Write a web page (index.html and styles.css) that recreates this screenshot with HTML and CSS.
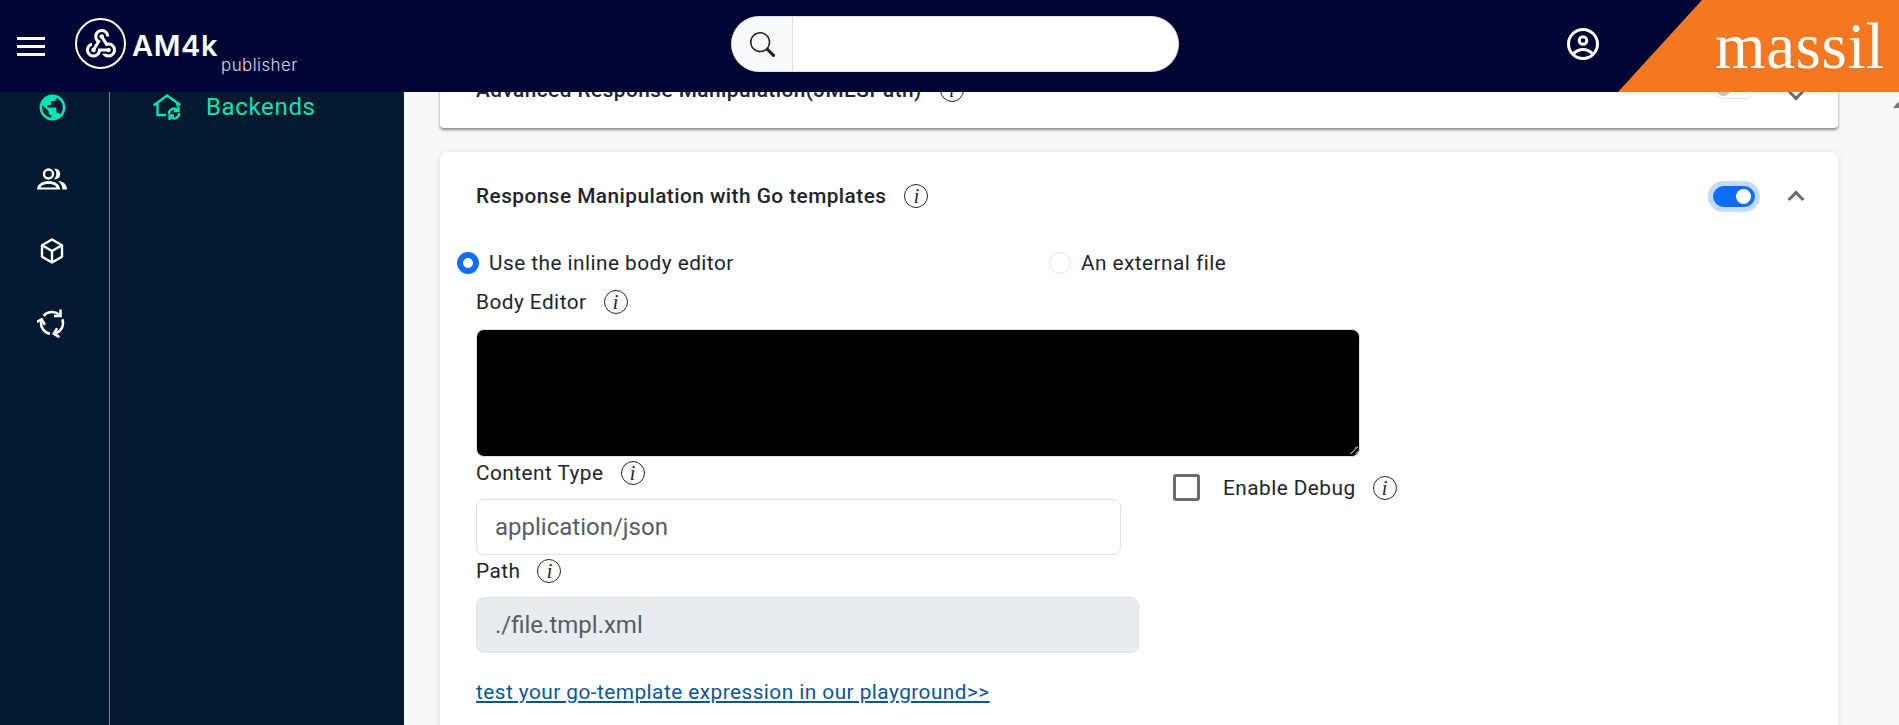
FILE: index.html
```html
<!DOCTYPE html>
<html lang="en">
<head>
  <meta charset="UTF-8">
  <title>AM4k publisher</title>
  <link rel="stylesheet" href="styles.css">
</head>
<body>
  <header class="topbar">
    <div class="burger"><span></span><span></span><span></span></div>
    <div class="logo">
      <div class="logo-ring">
        <svg viewBox="0 0 24 24" width="36" height="36" fill="#fff"><path d="M10 15h5.880c.27-.31.67-.5 1.120-.5.83 0 1.500.67 1.500 1.500s-.67 1.500-1.500 1.500c-.44 0-.84-.19-1.120-.5H11.900c-.46 2.280-2.480 4-4.900 4-2.760 0-5-2.240-5-5 0-2.420 1.720-4.440 4-4.900v2.070c-1.160.41-2 1.530-2 2.830 0 1.650 1.350 3 3 3s3-1.350 3-3v-1zm2.500-11c1.650 0 3 1.350 3 3h2c0-2.760-2.240-5-5-5s-5 2.240-5 5c0 1.430.6 2.710 1.550 3.620l-2.350 3.900c-.68.14-1.200.75-1.200 1.480 0 .83.67 1.500 1.500 1.500s1.500-.67 1.500-1.500c0-.16-.02-.31-.07-.45l3.380-5.630C10.490 9.610 9.500 8.420 9.500 7c0-1.650 1.350-3 3-3zm4.500 9c-.64 0-1.230.2-1.720.54l-3.050-5.070C11.530 8.350 11 7.740 11 7c0-.83.67-1.500 1.500-1.500S14 6.170 14 7c0 .15-.02.29-.06.43l2.190 3.650c.28-.05.57-.08.87-.08 2.760 0 5 2.240 5 5s-2.240 5-5 5c-1.850 0-3.470-1.010-4.330-2.500h2.670c.48.32 1.050.5 1.660.5 1.650 0 3-1.350 3-3s-1.350-3-3-3z"/></svg>
      </div>
      <div class="logo-text">
        <div class="logo-name">AM4k</div>
        <div class="logo-sub">publisher</div>
      </div>
    </div>
    <div class="search">
      <div class="search-icon">
        <svg viewBox="0 0 16 16" width="25" height="25" fill="#212529"><path d="M11.742 10.344a6.5 6.5 0 1 0-1.397 1.398h-.001c.03.04.062.078.098.115l3.85 3.85a1 1 0 0 0 1.415-1.414l-3.85-3.85a1.007 1.007 0 0 0-.115-.1zM12 6.5a5.5 5.5 0 1 1-11 0 5.5 5.5 0 0 1 11 0z"/></svg>
      </div>
      <div class="search-input"></div>
    </div>
    <div class="user">
      <svg viewBox="0 0 32 32" width="32" height="32" fill="none" stroke="#fff" stroke-width="3"><circle cx="16" cy="16" r="14.500"/><circle cx="16" cy="12.500" r="3.800"/><path d="M6.500 26c2.500-3 6-4.500 9.500-4.500s7 1.500 9.500 4.500"/></svg>
    </div>
    <div class="brand"><span>massil</span></div>
  </header>

  <div class="page">
    <aside class="sidebar">
      <nav class="rail">
        <div class="rail-item">
          <svg viewBox="0 0 24 24" width="31" height="31" fill="#00e6b4"><path d="M12 2C6.480 2 2 6.480 2 12s4.480 10 10 10 10-4.480 10-10S17.520 2 12 2zm-1 17.930c-3.950-.49-7-3.850-7-7.930 0-.62.080-1.210.21-1.790L9 15v1c0 1.100.9 2 2 2v1.930zm6.900-2.540c-.26-.81-1-1.390-1.900-1.390h-1v-3c0-.55-.45-1-1-1H8v-2h2c.55 0 1-.45 1-1V7h2c1.100 0 2-.9 2-2v-.41c2.930 1.190 5 4.060 5 7.410 0 2.080-.8 3.970-2.100 5.390z"/></svg>
        </div>
        <div class="rail-item">
          <svg viewBox="0 0 30 22" width="30" height="22" fill="#fff"><circle cx="11.500" cy="6" r="4.500" fill="none" stroke="#fff" stroke-width="2.400"/><path d="M0 21.500c0-5 5-8.500 11.500-8.500S23 16.500 23 21.500z"/><path d="M3.500 19.500c.5-2 3.800-3.500 8-3.500s7.500 1.500 8 3.500z" fill="#03192f"/><path d="M17 .8c3.200-.8 6.200 1.500 6.200 5.200s-3 6-6.200 5.200c1.500-1.300 2.300-3.200 2.300-5.200S18.500 2.100 17 .8zM21 13c5.500.5 9 3.500 9 8.500h-4.500c0-3.500-1.800-6.500-4.500-8.500z"/></svg>
        </div>
        <div class="rail-item">
          <svg viewBox="0 0 24 26" width="24" height="26" fill="none" stroke="#fff" stroke-width="2.400" stroke-linejoin="round"><path d="M12 1.500l10 5.700v11.600l-10 5.700-10-5.700V7.200z"/><path d="M2.500 7.500L12 13l9.500-5.500M12 13v11"/></svg>
        </div>
        <div class="rail-item">
          <svg viewBox="0 0 30 30" width="30" height="30" fill="none" stroke="#fff" stroke-width="2.500">
            <g><path d="M6.600 7.900A11 11 0 0 1 22.100 6.600"/><path d="M23.500 1.500V8H17"/></g>
            <g transform="rotate(120 15 15)"><path d="M6.600 7.900A11 11 0 0 1 22.100 6.600"/><path d="M23.500 1.500V8H17"/></g>
            <g transform="rotate(240 15 15)"><path d="M6.600 7.900A11 11 0 0 1 22.100 6.600"/><path d="M23.500 1.500V8H17"/></g>
          </svg>
        </div>
      </nav>
      <div class="subnav">
        <div class="subnav-item">
          <svg viewBox="0 0 28 26" width="28" height="26" fill="none" stroke="#00e6b4" stroke-width="2.300"><path d="M.7 11.500L14 1.500l13.300 9.500"/><path d="M4.500 9v12H13"/><path d="M24.500 9v3.500"/><path d="M16 20a5 5 0 0 1 8.500-4"/><path d="M25.500 12.500V17H21"/><path d="M26 19a5 5 0 0 1-8.500 4"/><path d="M16.500 26v-4.500H21"/></svg>
          <span>Backends</span>
        </div>
      </div>
    </aside>

    <main class="content">
      <section class="card card-closed">
        <div class="card-head">
          <h3>Advanced Response Manipulation(JMESPath)</h3>
          <i class="info">i</i>
          <div class="switch"></div>
          <div class="chevron down"></div>
        </div>
      </section>

      <section class="card card-open">
        <div class="card-head">
          <h3>Response Manipulation with Go templates</h3>
          <i class="info">i</i>
          <div class="switch on"></div>
          <div class="chevron up"></div>
        </div>

        <div class="radios">
          <label class="radio"><span class="dot on"></span>Use the inline body editor</label>
          <label class="radio"><span class="dot"></span>An external file</label>
        </div>

        <div class="field-label first">Body Editor <i class="info">i</i></div>
        <div class="editor"></div>

        <div class="columns">
          <div class="col-left">
            <div class="field-label">Content Type <i class="info">i</i></div>
            <div class="input short">application/json</div>
            <div class="field-label second">Path <i class="info">i</i></div>
            <div class="input disabled">./file.tmpl.xml</div>
            <a class="playground" href="#">test your go-template expression in our playground&gt;&gt;</a>
          </div>
          <div class="col-right">
            <span class="checkbox"></span>
            <span class="check-label">Enable Debug</span>
            <i class="info">i</i>
          </div>
        </div>
      </section>
    </main>
  </div>
  <div class="scroll-tip"></div>
</body>
</html>
```

FILE: styles.css
```css
* {
  margin: 0;
  padding: 0;
  box-sizing: border-box;
}
html, body {
  height: 100%;
  overflow: hidden;
}
body {
  font-family: Roboto, "Liberation Sans", sans-serif;
  font-size: 20.8px;
  letter-spacing: 0.46px;
  color: #212529;
  background: #f8f8f8;
}

/* top bar sits over the scrolled page */
.topbar {
  position: absolute;
  top: 0;
  left: 0;
  right: 0;
  height: 92px;
  z-index: 5;
  background: #000533;
  display: flex;
  align-items: center;
}
.burger {
  width: 28px;
  margin-left: 17px;
  display: flex;
  flex-direction: column;
  gap: 5px;
}
.burger span {
  height: 3px;
  background: #fff;
}
.logo {
  display: flex;
  margin-left: 30px;
  align-items: flex-start;
  height: 51px;
  margin-top: -5px;
}
.logo-ring {
  width: 51px;
  height: 51px;
  border: 2px solid #fff;
  border-radius: 50%;
  display: flex;
  align-items: center;
  justify-content: center;
}
.logo-text {
  margin-left: 6px;
  color: #fff;
}
.logo-name {
  font-family: Inter, sans-serif;
  font-weight: 600;
  font-size: 29px;
  line-height: 35px;
  letter-spacing: 0.6px;
  margin-top: 10px;
}
.logo-sub {
  font-family: Inter, sans-serif;
  font-weight: 300;
  font-size: 17px;
  line-height: 20px;
  letter-spacing: 0.4px;
  margin: -8px 0 0 89px;
  color: #d5d6e0;
  width: 90px;
}
.search {
  position: absolute;
  left: 731px;
  top: 16px;
  width: 448px;
  height: 56px;
  border-radius: 28px;
  overflow: hidden;
  display: flex;
  background: #fff;
  border: 1px solid #dee2e6;
}
.search-icon {
  width: 61px;
  background: #f8f9fa;
  border-right: 1px solid #dee2e6;
  display: flex;
  align-items: center;
  justify-content: center;
}
.search-input {
  flex: 1;
}
.user {
  position: absolute;
  left: 1567px;
  top: 28px;
  height: 32px;
}
.brand {
  position: absolute;
  top: 0;
  right: 0;
  width: 281px;
  height: 92px;
  background: #f47721;
  clip-path: polygon(84px 0, 100% 0, 100% 100%, 0 100%);
  font-family: "Liberation Serif", serif;
  color: #fff;
  font-size: 65px;
  letter-spacing: 0.6px;
  line-height: 92px;
}
.brand span {
  position: absolute;
  left: 97px;
  top: 0;
}

.page {
  display: flex;
  height: 100%;
}

/* left navigation */
.sidebar {
  width: 404px;
  flex-shrink: 0;
  background: #03192f;
  display: flex;
}
.rail {
  width: 110px;
  padding-top: 71px;
  padding-right: 5px;
  border-right: 1px solid #7d8793;
}
.rail-item {
  height: 72px;
  display: flex;
  align-items: center;
  justify-content: center;
}
.subnav {
  flex: 1;
  padding-top: 92px;
}
.subnav-item {
  display: flex;
  align-items: center;
  padding-left: 43px;
  gap: 25px;
  height: 30px;
  font-size: 24px;
  letter-spacing: 0.65px;
  color: #00e6b4;
}

/* main column */
.content {
  flex: 1;
  padding: 46px 61px 0 36px;
}
.card {
  background: #fff;
}
.card-closed {
  height: 82px;
  border-radius: 0 0 4px 4px;
  box-shadow: 0 2px 3px rgba(0, 0, 0, 0.45);
}
.card-open {
  margin-top: 24px;
  height: 620px;
  border-radius: 8px;
  box-shadow: 0 1px 6px rgba(0, 0, 0, 0.12);
}
.card-head {
  height: 88px;
  padding: 0 30px 0 36px;
  display: flex;
  align-items: center;
}
.card-head h3 {
  font-size: 20.8px;
  font-weight: 500;
}
.card-head .info {
  margin-left: 18px;
}
.info {
  display: inline-flex;
  align-items: center;
  justify-content: center;
  width: 24px;
  height: 24px;
  border: 1.7px solid #212529;
  border-radius: 50%;
  font-family: "Liberation Serif", serif;
  font-style: italic;
  font-size: 20px;
  line-height: 1;
  letter-spacing: 0;
  color: #212529;
}
.switch {
  margin-left: auto;
  width: 42px;
  height: 21px;
  border: 1px solid #dee2e6;
  border-radius: 11px;
  position: relative;
  background: #fff;
}
.card-closed .switch {
  margin-top: -4px;
}
.switch::after {
  content: "";
  position: absolute;
  left: 2px;
  top: 2px;
  width: 15px;
  height: 15px;
  border-radius: 50%;
  background: #c4c4c4;
}
.switch.on {
  background: #0d6efd;
  border-color: #0d6efd;
  box-shadow: 0 0 0 5px #c2dbfe;
}
.switch.on::after {
  left: auto;
  right: 3px;
  background: #fff;
}
.chevron {
  width: 12px;
  height: 12px;
  margin: 6px 6px 0 35px;
  border: solid #6c6c6c;
  border-width: 3px 0 0 3px;
  transform: rotate(45deg);
}
.chevron.down {
  margin-top: 3px;
  transform: rotate(225deg);
}
.radios {
  display: grid;
  grid-template-columns: 592px 1fr;
  margin-left: 17px;
  margin-top: 9px;
}
.radio {
  display: flex;
  align-items: center;
  gap: 10px;
  height: 28px;
}
.dot {
  width: 22px;
  height: 22px;
  border-radius: 50%;
  border: 1px solid #dee2e6;
  background: #fff;
}
.dot.on {
  border: 6px solid #0d6efd;
}
.field-label {
  height: 28px;
  display: flex;
  align-items: center;
  gap: 17px;
}
.first {
  margin: 11px 0 0 36px;
}
.second {
  margin-top: 2px;
}
.editor {
  margin: 13px 0 0 36px;
  width: 884px;
  height: 128px;
  background: #000;
  border: 1px solid #dee2e6;
  border-radius: 8px;
  position: relative;
}
.editor::after {
  content: "";
  position: absolute;
  right: 1px;
  bottom: 2px;
  width: 9px;
  height: 9px;
  background: linear-gradient(135deg, transparent 50%, #888 50%, #888 62%, transparent 62%, transparent 80%, #888 80%);
}
.columns {
  display: flex;
  margin-left: 36px;
}
.col-left {
  width: 663px;
  padding-top: 2px;
}
.input {
  height: 56px;
  margin-top: 12px;
  padding: 0 18px;
  border: 1px solid #dee2e6;
  border-radius: 8px;
  font-size: 24px;
  letter-spacing: 0;
  line-height: 54px;
  color: #595c5f;
  background: #fff;
}
.input.short {
  width: 645px;
}
.input.disabled {
  background: #e9ecef;
}
.playground {
  display: inline-block;
  margin-top: 27px;
  color: #0a5696;
}
.col-right {
  margin-left: 34px;
  margin-top: 17px;
  height: 27px;
  display: flex;
  align-items: center;
}
.checkbox {
  width: 27px;
  height: 27px;
  border: 3px solid #6b6b6b;
  border-radius: 3px;
}
.check-label {
  margin: 0 17px 0 23px;
}

.scroll-tip {
  position: absolute;
  right: -4px;
  top: 102px;
  width: 0;
  height: 0;
  border: solid transparent;
  border-width: 0 5px 6px;
  border-bottom-color: #777;
}
```
